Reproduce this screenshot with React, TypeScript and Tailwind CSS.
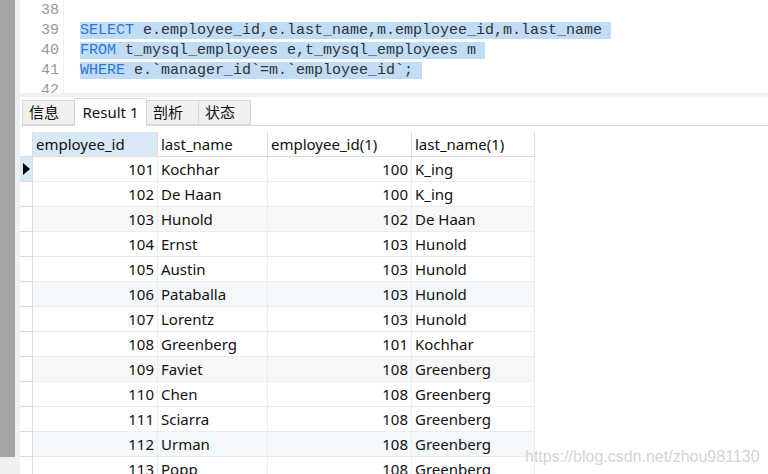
import React from 'react';

const rows: [number, string, number, string][] = [
    [101, 'Kochhar', 100, 'K_ing'],
    [102, 'De Haan', 100, 'K_ing'],
    [103, 'Hunold', 102, 'De Haan'],
    [104, 'Ernst', 103, 'Hunold'],
    [105, 'Austin', 103, 'Hunold'],
    [106, 'Pataballa', 103, 'Hunold'],
    [107, 'Lorentz', 103, 'Hunold'],
    [108, 'Greenberg', 101, 'Kochhar'],
    [109, 'Faviet', 108, 'Greenberg'],
    [110, 'Chen', 108, 'Greenberg'],
    [111, 'Sciarra', 108, 'Greenberg'],
    [112, 'Urman', 108, 'Greenberg'],
    [113, 'Popp', 108, 'Greenberg'],
];

const mono = { fontFamily: '"Liberation Mono", "DejaVu Sans Mono", monospace' };

function Kw({ children }: { children: React.ReactNode }) {
    return <span className="text-[#2b78d8]">{children}</span>;
}

function Editor() {
    return (
        <div className="h-[93px] shrink-0 overflow-hidden flex bg-white text-[15px] leading-[20px] pt-[1px]" style={mono}>
            <div className="w-[44px] shrink-0 border-r border-[#f0f0f0] text-right pr-[4px] text-[#999]">
                <div>38</div>
                <div>39</div>
                <div>40</div>
                <div>41</div>
                <div>42</div>
            </div>
            <div className="pl-[16px] text-[#333] whitespace-pre">
                <div>&nbsp;</div>
                <div><span className="bg-[#c0dcf7]"><Kw>SELECT</Kw> e.employee_id,e.last_name,m.employee_id,m.last_name </span></div>
                <div><span className="bg-[#c0dcf7]"><Kw>FROM</Kw> t_mysql_employees e,t_mysql_employees m </span></div>
                <div><span className="bg-[#c0dcf7]"><Kw>WHERE</Kw> e.`manager_id`=m.`employee_id`; </span></div>
                <div>&nbsp;</div>
            </div>
        </div>
    );
}

function Tabs() {
    const tab = "h-[25px] px-[6px] flex items-center border border-[#d6d6d6] bg-[#f0f0f0] text-[15px] text-[#111] -ml-px";
    return (
        <div className="h-[29px] shrink-0 flex items-end border-b border-[#d9d9d9] pl-[2px] bg-white" style={{ fontFamily: '"Noto Sans", "Noto Sans CJK SC", sans-serif' }}>
            <div className={`${tab} w-[53px] ml-0`}>信息</div>
            <div className="h-[28px] w-[73px] -mb-px flex items-center justify-center border border-b-0 border-[#d6d6d6] bg-white text-[15px] text-[#111] -ml-px">Result 1</div>
            <div className={`${tab} w-[53px]`}>剖析</div>
            <div className={`${tab} w-[53px]`}>状态</div>
        </div>
    );
}

const cols = "grid grid-cols-[13px_125px_110px_144px_123px]";

function Grid() {
    return (
        <div className="mt-[6px] shrink-0 text-[15px] text-[#111]" style={{ fontFamily: '"Noto Sans", sans-serif' }}>
            <div className={`${cols} h-[25px]`}>
                <div className="border-r border-b border-[#dcdcdc]" />
                <div className="bg-[#d8e8f7] border-r border-b border-[#dcdcdc] pl-[3px] leading-[24px]">employee_id</div>
                <div className="border-r border-b border-[#dcdcdc] pl-[3px] leading-[24px]">last_name</div>
                <div className="border-r border-b border-[#dcdcdc] pl-[3px] leading-[24px]">employee_id(1)</div>
                <div className="border-r border-b border-[#dcdcdc] pl-[3px] leading-[24px]">last_name(1)</div>
            </div>
            {rows.map((r, i) => {
                const tint = i % 3 === 2 ? (Math.floor(i / 3) % 2 === 0 ? 'bg-[#f7f7f7]' : 'bg-[#f3f8fd]') : 'bg-white';
                return (
                    <div key={r[0]} className={`${cols} h-[25px]`}>
                        <div className={`border-r border-b border-[#dcdcdc] flex items-center justify-center ${i === 0 ? 'bg-[#d8e8f7]' : 'bg-white'}`}>
                            {i === 0 && (
                                <svg width="7" height="12" viewBox="0 0 7 12"><path d="M0 0 L7 6 L0 12 Z" fill="#000" /></svg>
                            )}
                        </div>
                        <div className={`${tint} border-r border-b border-[#ececec] text-right pr-[3px] leading-[24px]`}>{r[0]}</div>
                        <div className={`${tint} border-r border-b border-[#ececec] pl-[3px] leading-[24px]`}>{r[1]}</div>
                        <div className={`${tint} border-r border-b border-[#ececec] text-right pr-[3px] leading-[24px]`}>{r[2]}</div>
                        <div className={`${tint} border-r border-b border-[#ececec] pl-[3px] leading-[24px]`}>{r[3]}</div>
                    </div>
                );
            })}
        </div>
    );
}

export default function App() {
    return (
        <div className="relative w-[768px] h-[474px] overflow-hidden flex bg-white">
            <div className="w-[15px] shrink-0 flex flex-col">
                <div className="h-[457px] shrink-0 bg-[#a5a5a5]" />
                <div className="flex-1 bg-[#f0f0f0]" />
            </div>
            <div className="w-[5px] shrink-0 bg-[#f0f0f0]" />
            <div className="flex-1 flex flex-col min-w-0">
                <Editor />
                <div className="h-[4px] shrink-0 bg-[#f0f0f0]" />
                <Tabs />
                <Grid />
            </div>
            <div
                className="absolute left-[525px] top-[445px] text-[16px] text-[#c8c8c8]/80 whitespace-nowrap"
                style={{ fontFamily: '"Liberation Sans", Arial, sans-serif' }}
            >
                https://blog.csdn.net/zhou981130
            </div>
        </div>
    );
}
